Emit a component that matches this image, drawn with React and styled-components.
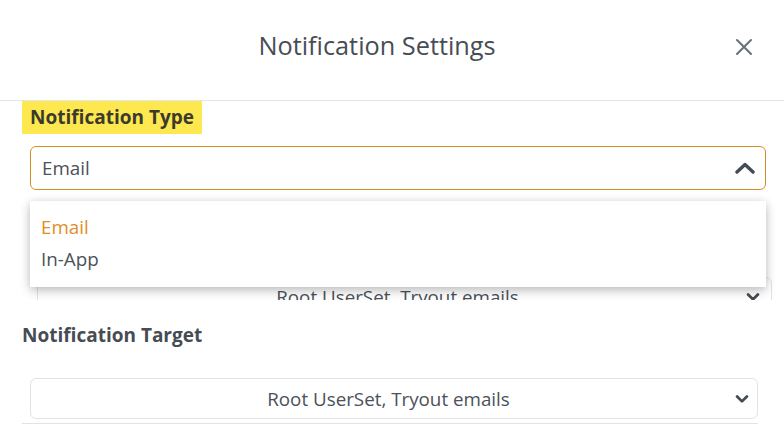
import React from "react";
import styled, { createGlobalStyle } from "styled-components";

const Global = createGlobalStyle`
  html, body { margin: 0; padding: 0; background: #ffffff; }
  body { font-family: "Open Sans", "Lato", sans-serif; color: #454b53; }
  * { box-sizing: border-box; }
`;

const Modal = styled.div`
  width: 784px;
  height: 432px;
  overflow: hidden;
  background: #fff;
`;

const Header = styled.header`
  height: 101px;
  display: flex;
  align-items: center;
  position: relative;
  border-bottom: 1px solid #e4e4e4;
`;

const Title = styled.h1`
  flex: 1;
  margin: 0 30px 10px 0;
  text-align: center;
  font-size: 25.3px;
  line-height: 32px;
  font-weight: 400;
  color: #474d55;
`;

const CloseButton = styled.button`
  position: absolute;
  right: 29px;
  top: 36px;
  width: 22px;
  height: 22px;
  padding: 0;
  border: 0;
  background: none;
  display: flex;
  align-items: center;
  justify-content: center;
  color: #6a7079;
`;

const TypeSection = styled.section`
  position: relative;
  height: 199px;
  overflow: hidden;
  padding: 0 18px 0 22px;
`;

const Highlight = styled.div`
  display: inline-block;
  height: 33px;
  line-height: 32px;
  padding: 0 8px;
  background: #fde84f;
  color: #3b3a2c;
  font-size: 19px;
  font-weight: 700;
`;

const SelectBox = styled.div`
  display: flex;
  align-items: center;
  margin: ${(p) => p.$mt}px 0 0 8px;
  height: ${(p) => p.$h}px;
  padding: 0 ${(p) => p.$pr}px 0 11px;
  border: 1px solid ${(p) => (p.$open ? "#d88b24" : "#e3e3e3")};
  border-radius: 6px;
  background: #fff;
  font-size: 18.8px;
  color: #4b5159;
  position: relative;
`;

const SelectText = styled.span`
  flex: 1;
  text-align: ${(p) => (p.$center ? "center" : "left")};
`;

const Caret = styled.span`
  display: flex;
  align-items: center;
  color: #454b53;
`;

const GhostSelect = styled(SelectBox)`
  margin: 87px -6px 0 15px;
  height: 40px;
`;

const Menu = styled.ul`
  position: absolute;
  left: 30px;
  top: 100px;
  width: 736px;
  margin: 0;
  padding: 10px 0 12px;
  list-style: none;
  background: #fff;
  box-shadow: 0 4px 10px rgba(0, 0, 0, 0.22), 0 0 8px rgba(0, 0, 0, 0.08);
  z-index: 2;
`;

const MenuItem = styled.li`
  height: 32px;
  line-height: 32px;
  padding-left: 11px;
  font-size: 18.8px;
  color: ${(p) => (p.$active ? "#e48c25" : "#4b5159")};
`;

const TargetSection = styled.section`
  padding: 23px 26px 0 22px;
`;

const Label = styled.div`
  font-size: 19px;
  font-weight: 700;
  color: #464c54;
  line-height: 24px;
`;

const Rule = styled.div`
  margin-top: 4px;
  height: 1px;
  background: #e3e3e3;
`;

const ChevronUp = () => (
  <svg width="20" height="14" viewBox="0 0 20 14" fill="none">
    <path d="M2 11 L10 3.5 L18 11" stroke="currentColor" strokeWidth="3.4" strokeLinecap="round" strokeLinejoin="round" />
  </svg>
);

const ChevronDown = ({ size = 14 }) => (
  <svg width={size} height={size * 0.7} viewBox="0 0 14 10" fill="none">
    <path d="M2 2.5 L7 7.5 L12 2.5" stroke="currentColor" strokeWidth="2.8" strokeLinecap="round" strokeLinejoin="round" />
  </svg>
);

const CloseIcon = () => (
  <svg width="18" height="18" viewBox="0 0 18 18" fill="none">
    <path d="M2 2 L16 16 M16 2 L2 16" stroke="currentColor" strokeWidth="2" strokeLinecap="round" />
  </svg>
);

export default function App() {
  return (
    <>
      <Global />
      <Modal>
        <Header>
          <Title>Notification Settings</Title>
          <CloseButton aria-label="Close">
            <CloseIcon />
          </CloseButton>
        </Header>

        <TypeSection>
          <Highlight>Notification Type</Highlight>
          <SelectBox $open $mt={12} $h={44} $pr={10}>
            <SelectText>Email</SelectText>
            <Caret>
              <ChevronUp />
            </Caret>
          </SelectBox>
          <Menu>
            <MenuItem $active>Email</MenuItem>
            <MenuItem>In-App</MenuItem>
          </Menu>
          <GhostSelect $pr={11}>
            <SelectText $center>Root UserSet, Tryout emails</SelectText>
            <Caret>
              <ChevronDown />
            </Caret>
          </GhostSelect>
        </TypeSection>

        <TargetSection>
          <Label>Notification Target</Label>
          <SelectBox $mt={31} $h={41} $pr={8}>
            <SelectText $center>Root UserSet, Tryout emails</SelectText>
            <Caret>
              <ChevronDown />
            </Caret>
          </SelectBox>
          <Rule />
        </TargetSection>
      </Modal>
    </>
  );
}
